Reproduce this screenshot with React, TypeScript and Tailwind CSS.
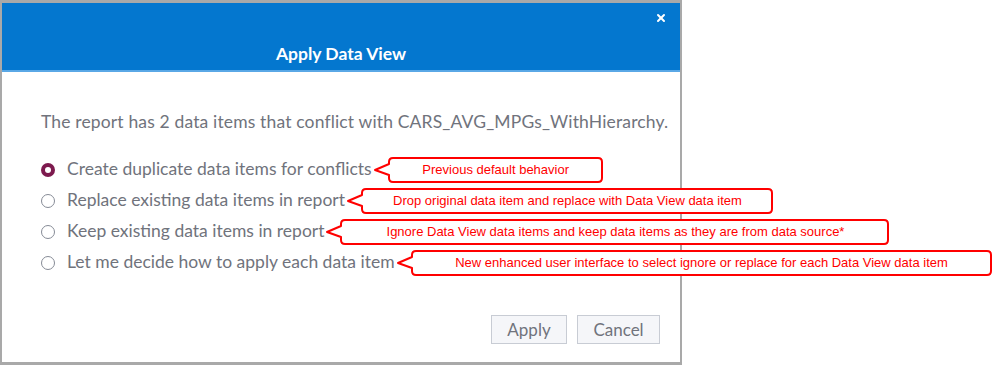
import { X } from "lucide-react";

type CalloutProps = {
  text: string;
  width: number;
};

const Callout = ({ text, width }: CalloutProps) => {
  const h = 26;
  const x0 = 15;
  const x1 = width - 1;
  const r = 4;
  const mid = h / 2;
  const d = `M ${x0 + r} 1 H ${x1 - r} Q ${x1} 1 ${x1} ${1 + r} V ${h - 1 - r} Q ${x1} ${h - 1} ${x1 - r} ${h - 1} H ${x0 + r} Q ${x0} ${h - 1} ${x0} ${h - 1 - r} V ${mid + 5} L 1 ${mid} L ${x0} ${mid - 6} V ${1 + r} Q ${x0} 1 ${x0 + r} 1 Z`;
  return (
    <div
      className="relative ml-[2px] flex h-[26px] shrink-0 items-center justify-center pl-[15px]"
      style={{ width }}
    >
      <svg className="absolute inset-0" width={width} height={h}>
        <path d={d} fill="#ffffff" stroke="#ff0000" strokeWidth="2" strokeLinejoin="round" />
      </svg>
      <span className="relative font-['Liberation_Sans',Arial,sans-serif] text-[13px] text-[#ff0000]">
        {text}
      </span>
    </div>
  );
};

const options = [
  {
    label: "Create duplicate data items for conflicts",
    note: "Previous default behavior",
    width: 229,
    checked: true,
  },
  {
    label: "Replace existing data items in report",
    note: "Drop original data item and replace with Data View data item",
    width: 426,
    checked: false,
  },
  {
    label: "Keep existing data items in report",
    note: "Ignore Data View data items and keep data items as they are from data source*",
    width: 563,
    checked: false,
  },
  {
    label: "Let me decide how to apply each data item",
    note: "New enhanced user interface to select ignore or replace for each Data View data item",
    width: 595,
    checked: false,
  },
];

export default function App() {
  return (
    <div className="h-[365px] w-[999px] overflow-hidden bg-white font-['Lato',sans-serif]">
      <div className="flex h-[365px] w-[682px] flex-col border-x-2 border-y-[3px] border-[#a9a9a9] bg-white">
        {/* header */}
        <div className="relative flex h-[69px] shrink-0 items-end justify-center border-b-2 border-[#5aa8e6] bg-[#0477cf] pb-[4px]">
          <span className="text-[17.5px] font-bold leading-[24px] text-white">Apply Data View</span>
          <button className="absolute right-[13px] top-[9px] text-white">
            <X size={12} strokeWidth={4} />
          </button>
        </div>

        {/* body */}
        <div className="flex flex-1 flex-col px-[39px] pt-[39px]">
          <p className="whitespace-nowrap text-[17.5px] leading-[22px] tracking-[0.15px] text-[#70737c]">
            The report has 2 data items that conflict with CARS_AVG_MPGs_WithHierarchy.
          </p>

          <div className="mt-[21px] flex flex-col">
            {options.map((o) => (
              <div key={o.label} className="flex h-[31px] items-center">
                {o.checked ? (
                  <span className="flex h-[14px] w-[14px] shrink-0 items-center justify-center rounded-full bg-[#7d1a4e]">
                    <span className="h-[6px] w-[6px] rounded-full bg-white" />
                  </span>
                ) : (
                  <span className="h-[14px] w-[14px] shrink-0 rounded-full border-[1.5px] border-[#868b96] bg-white" />
                )}
                <span className="ml-[12px] whitespace-nowrap text-[17.5px] text-[#70737c]">
                  {o.label}
                </span>
                <Callout text={o.note} width={o.width} />
              </div>
            ))}
          </div>

          <div className="mt-auto mb-[18px] mr-[-19px] flex justify-end gap-[10px]">
            <button className="h-[29px] w-[76px] border border-[#c8ccd4] bg-[#f5f6f9] text-[17px] text-[#70737c]">
              Apply
            </button>
            <button className="h-[29px] w-[83px] border border-[#c8ccd4] bg-[#f5f6f9] text-[17px] text-[#70737c]">
              Cancel
            </button>
          </div>
        </div>
      </div>
    </div>
  );
}
